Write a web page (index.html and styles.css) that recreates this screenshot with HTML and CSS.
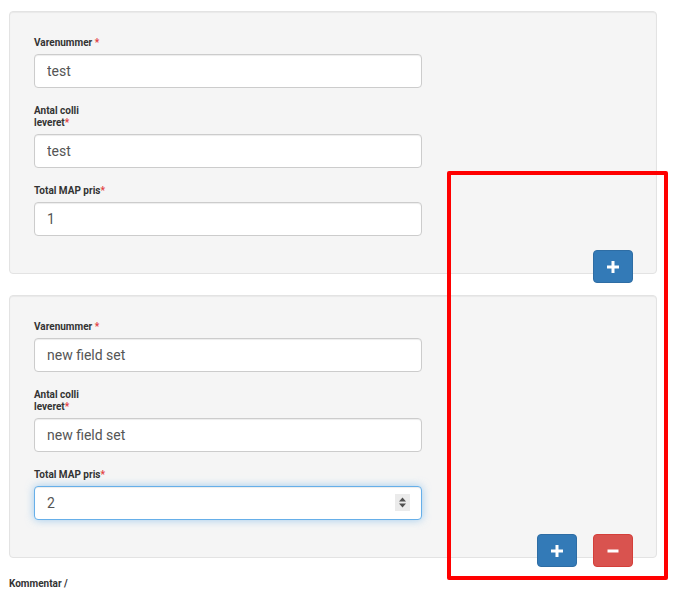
FILE: index.html
```html
<!DOCTYPE html>
<html lang="da">
<head>
<meta charset="utf-8">
<title>Form</title>
<link rel="stylesheet" href="styles.css">
</head>
<body>
<div class="page">
  <div class="panel">
    <div class="group">
      <label class="lbl">Varenummer <span class="req">*</span></label>
      <input class="field" type="text" value="test">
    </div>
    <div class="group">
      <label class="lbl">Antal colli<br>leveret<span class="req">*</span></label>
      <input class="field" type="text" value="test">
    </div>
    <div class="group">
      <label class="lbl">Total MAP pris<span class="req">*</span></label>
      <input class="field" type="text" value="1">
    </div>
    <div class="actions">
      <button class="btn btn-add" type="button" aria-label="Tilføj">
        <svg width="12" height="12" viewBox="0 0 12 12"><rect x="4.5" y="0" width="3" height="12" fill="#fff"/><rect x="0" y="4.5" width="12" height="3" fill="#fff"/></svg>
      </button>
    </div>
  </div>

  <div class="panel">
    <div class="group">
      <label class="lbl">Varenummer <span class="req">*</span></label>
      <input class="field" type="text" value="new field set">
    </div>
    <div class="group">
      <label class="lbl">Antal colli<br>leveret<span class="req">*</span></label>
      <input class="field" type="text" value="new field set">
    </div>
    <div class="group">
      <label class="lbl">Total MAP pris<span class="req">*</span></label>
      <div class="spin-wrap">
        <input class="field focus" type="text" value="2">
        <span class="spinner">
          <svg width="15" height="17" viewBox="0 0 15 17"><path d="M4 7.5 L7.5 3.5 L11 7.5 Z" fill="#505050"/><path d="M4 9.5 L7.5 13.5 L11 9.5 Z" fill="#505050"/></svg>
        </span>
      </div>
    </div>
    <div class="actions">
      <button class="btn btn-add" type="button" aria-label="Tilføj">
        <svg width="12" height="12" viewBox="0 0 12 12"><rect x="4.5" y="0" width="3" height="12" fill="#fff"/><rect x="0" y="4.5" width="12" height="3" fill="#fff"/></svg>
      </button>
      <button class="btn btn-remove" type="button" aria-label="Fjern">
        <svg width="12" height="12" viewBox="0 0 12 12"><rect x="0.5" y="4.5" width="11" height="3" fill="#fff"/></svg>
      </button>
    </div>
  </div>

  <div class="comment-label">Kommentar /</div>

  <div class="highlight"></div>
</div>
</body>
</html>
```

FILE: styles.css
```css
html, body {
  margin: 0;
  padding: 0;
  background: #ffffff;
}

body {
  font-family: Roboto, "Helvetica Neue", "Liberation Sans", Arial, sans-serif;
  color: #333333;
}

.page {
  position: relative;
  padding: 11px 17px 0 9px;
  height: 594px;
  box-sizing: border-box;
  overflow: hidden;
}

.panel {
  background: #f5f5f5;
  border: 1px solid #e3e3e3;
  border-radius: 4px;
  padding: 25px 24px 0;
  box-shadow: inset 0 1px 1px rgba(0, 0, 0, 0.05);
}

.panel + .panel {
  margin-top: 21px;
}

.group + .group {
  margin-top: 17px;
}

.lbl {
  display: block;
  font-size: 10px;
  line-height: 12px;
  font-weight: 700;
  color: #333333;
  margin-bottom: 5px;
}

.req {
  color: #e2403d;
}

.field {
  display: block;
  box-sizing: border-box;
  width: 388px;
  height: 34px;
  margin: 0;
  padding: 6px 12px;
  font-family: Roboto, "Helvetica Neue", "Liberation Sans", Arial, sans-serif;
  font-size: 14px;
  color: #555555;
  background: #ffffff;
  border: 1px solid #cccccc;
  border-radius: 4px;
  box-shadow: inset 0 1px 1px rgba(0, 0, 0, 0.075);
  outline: none;
}

.field.focus {
  border-color: #66afe9;
  box-shadow: inset 0 1px 1px rgba(0, 0, 0, 0.075), 0 0 8px rgba(102, 175, 233, 0.6);
}

.spin-wrap {
  position: relative;
  width: 388px;
}

.spinner {
  position: absolute;
  right: 12px;
  top: 8px;
  width: 15px;
  height: 17px;
  background: #ebebeb;
  display: block;
}

.spinner svg {
  display: block;
}

.actions {
  display: flex;
  justify-content: flex-end;
  gap: 16px;
  margin-top: 14px;
  margin-bottom: -10px;
  margin-right: -1px;
}

.btn {
  box-sizing: border-box;
  width: 40px;
  height: 33px;
  padding: 0;
  border: 1px solid;
  border-radius: 4px;
  display: flex;
  align-items: center;
  justify-content: center;
  cursor: pointer;
}

.btn svg {
  display: block;
}

.btn-add {
  background: #337ab7;
  border-color: #2e6da4;
}

.btn-remove {
  background: #d9534f;
  border-color: #d43f3a;
}

.comment-label {
  margin-top: 20px;
  font-size: 10px;
  line-height: 12px;
  font-weight: 700;
  color: #333333;
}

.highlight {
  position: absolute;
  left: 447px;
  top: 171px;
  width: 221px;
  height: 409px;
  box-sizing: border-box;
  border: 4px solid #ff0000;
  border-radius: 2px;
  pointer-events: none;
}
```
